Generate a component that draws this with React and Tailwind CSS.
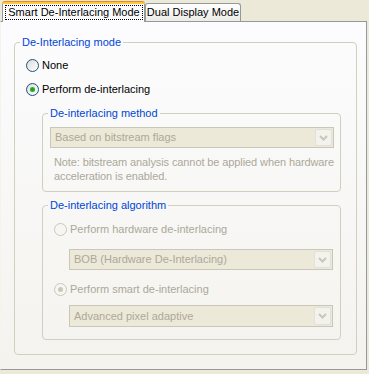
function Radio({ checked, disabled }) {
  return (
    <span
      className={
        disabled
          ? "flex h-[13px] w-[13px] shrink-0 items-center justify-center rounded-full border border-[#cac8bb] bg-[#f7f6f2]"
          : "flex h-[13px] w-[13px] shrink-0 items-center justify-center rounded-full border border-[#1c5180] bg-gradient-to-br from-[#dcdcd7] to-white"
      }
    >
      {checked && (
        <span
          className={
            disabled
              ? "h-[5px] w-[5px] rounded-full bg-[#cac8bb]"
              : "h-[5px] w-[5px] rounded-full bg-[#21a121] shadow-[inset_0_0_1px_#7be07b]"
          }
        />
      )}
    </span>
  );
}

function RadioRow({ label, checked, disabled, className = "" }) {
  return (
    <div className={`flex h-[17px] items-center gap-[3px] ${className}`}>
      <Radio checked={checked} disabled={disabled} />
      <span className={disabled ? "text-[#aca899]" : "text-black"}>{label}</span>
    </div>
  );
}

function Combo({ value, className = "" }) {
  return (
    <div className={`flex items-center border border-[#c9c7ba] bg-[#ece9d8] p-px ${className}`}>
      <span className="flex-1 truncate pl-[3px] text-[#aca899]">{value}</span>
      <span className="flex h-full w-[17px] items-center justify-center rounded-[2px] border border-[#e3e1d6] bg-[#f3f2ec]">
        <svg width="9" height="6" viewBox="0 0 9 6">
          <path d="M1 1l3.5 3.5L8 1" stroke="#c9c7ba" strokeWidth="2" fill="none" />
        </svg>
      </span>
    </div>
  );
}

function Group({ title, className = "", children }) {
  return (
    <fieldset className={`min-w-0 rounded-[4px] border border-[#d0d0bf] ${className}`}>
      <legend className="ml-[5px] px-[2px] leading-[13px] text-[#0046d5]">{title}</legend>
      {children}
    </fieldset>
  );
}

export default function App() {
  return (
    <div className="h-[374px] w-[369px] bg-[#ece9d8] font-['Liberation_Sans',Arial,sans-serif] text-[11px] leading-[13px]">
      <div className="flex h-[21px] items-end pl-[2px]">
        <div className="relative z-10 -mb-px flex h-[21px] w-[143px] flex-col">
          <div className="h-[3px] rounded-t-[3px] border-t border-[#e68b2c] bg-[#ffc73c]" />
          <div className="flex flex-1 items-start border-x border-[#919b9c] bg-[#fcfcfe] pl-[2px] pr-px pt-px">
            <div className="flex h-[15px] flex-1 items-center justify-center border border-dotted border-black">
              Smart De-Interlacing Mode
            </div>
          </div>
        </div>
        <div className="flex h-[18px] w-[96px] items-center justify-center rounded-t-[3px] border-x border-t border-[#919b9c] bg-gradient-to-b from-white to-[#ecebe6]">
          Dual Display Mode
        </div>
      </div>

      <div className="h-[349px] w-[367px] border border-l-[#f4f3ee] border-[#919b9c] bg-gradient-to-b from-[#fcfcfe] to-[#f4f3ee] pl-[13px] pt-[14px]">
        <Group title="De-Interlacing mode" className="w-[343px]">
          <div className="pb-[14px] pl-[11px] pr-[15px]">
            <RadioRow label="None" className="mt-[8px]" />
            <RadioRow label="Perform de-interlacing" checked className="mt-[7px]" />

            <Group title="De-interlacing method" className="ml-[16px] mt-[9px] w-[299px]">
              <div className="pb-[8px] pl-[7px] pr-[6px]">
                <Combo value="Based on bitstream flags" className="mt-[7px] h-[21px]" />
                <p className="mt-[7px] whitespace-nowrap pl-[4px] tracking-[-0.1px] leading-[14px] text-[#aca899]">
                  Note: bitstream analysis cannot be applied when hardware
                  <br />
                  acceleration is enabled.
                </p>
              </div>
            </Group>

            <Group title="De-interlacing algorithm" className="ml-[16px] mt-[7px] w-[299px]">
              <div className="pb-[12px] pl-[11px] pr-[7px]">
                <RadioRow label="Perform hardware de-interlacing" disabled className="mt-[9px]" />
                <Combo value="BOB (Hardware De-Interlacing)" className="ml-[15px] mt-[11px] h-[21px]" />
                <RadioRow label="Perform smart de-interlacing" checked disabled className="mt-[11px]" />
                <Combo value="Advanced pixel adaptive" className="ml-[15px] mt-[7px] h-[22px]" />
              </div>
            </Group>
          </div>
        </Group>
      </div>
    </div>
  );
}
